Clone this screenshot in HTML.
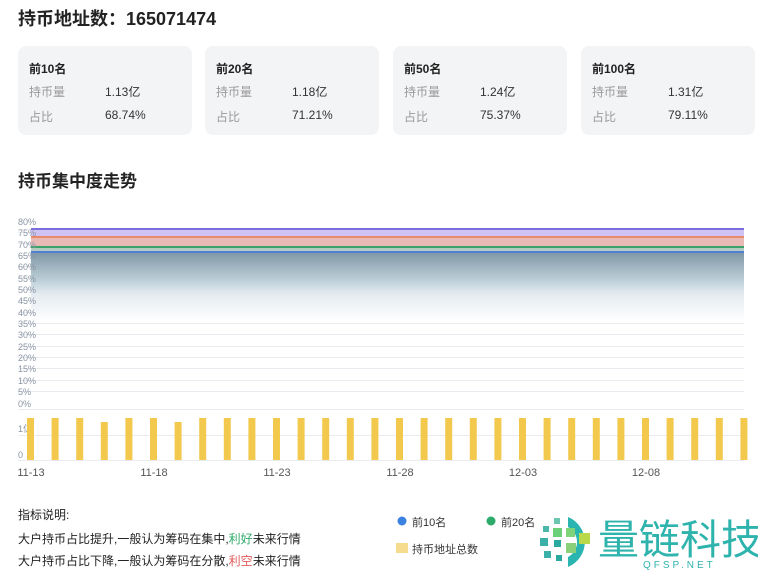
<!DOCTYPE html>
<html><head><meta charset="utf-8"><style>
body{margin:0;width:758px;height:571px;overflow:hidden;background:#fff;font-family:"Liberation Sans","Noto Sans CJK SC",sans-serif;color:#222;position:relative}
.a{position:absolute;white-space:nowrap}
.card{position:absolute;top:46px;width:174px;height:89px;background:#f3f4f6;border-radius:8px}
.card .t{position:absolute;left:11px;top:14px;font-size:12px;font-weight:bold;color:#222}
.card .l{position:absolute;left:11px;font-size:12px;color:#999}
.card .v{position:absolute;left:87px;font-size:12px;color:#333}
</style></head><body>
<div class="a" style="left:18px;top:5px;font-size:18px;font-weight:bold">持币地址数：165071474</div>

<div class="card" style="left:18px"><div class="t">前10名</div><div class="l" style="top:37px">持币量</div><div class="v" style="top:37px">1.13亿</div><div class="l" style="top:62px">占比</div><div class="v" style="top:62px">68.74%</div></div>
<div class="card" style="left:205px"><div class="t">前20名</div><div class="l" style="top:37px">持币量</div><div class="v" style="top:37px">1.18亿</div><div class="l" style="top:62px">占比</div><div class="v" style="top:62px">71.21%</div></div>
<div class="card" style="left:393px"><div class="t">前50名</div><div class="l" style="top:37px">持币量</div><div class="v" style="top:37px">1.24亿</div><div class="l" style="top:62px">占比</div><div class="v" style="top:62px">75.37%</div></div>
<div class="card" style="left:581px"><div class="t">前100名</div><div class="l" style="top:37px">持币量</div><div class="v" style="top:37px">1.31亿</div><div class="l" style="top:62px">占比</div><div class="v" style="top:62px">79.11%</div></div>

<div class="a" style="left:18px;top:167px;font-size:17px;font-weight:bold">持币集中度走势</div>

<svg class="a" style="left:0;top:0" width="758" height="571">
<defs>
<linearGradient id="g" x1="0" y1="0" x2="0" y2="1">
<stop offset="0" stop-color="#7f97a5"/><stop offset="0.4" stop-color="#bccfd8"/><stop offset="0.6" stop-color="#e4ebf0"/><stop offset="1" stop-color="#fff"/>
</linearGradient>
</defs>
<g stroke="#e8ebef" stroke-width="1">
<line x1="18" x2="744" y1="232.5" y2="232.5"/><line x1="18" x2="744" y1="243.5" y2="243.5"/><line x1="18" x2="744" y1="255.5" y2="255.5"/><line x1="18" x2="744" y1="266.5" y2="266.5"/><line x1="18" x2="744" y1="277.5" y2="277.5"/><line x1="18" x2="744" y1="289.5" y2="289.5"/><line x1="18" x2="744" y1="300.5" y2="300.5"/><line x1="18" x2="744" y1="312.5" y2="312.5"/><line x1="18" x2="744" y1="323.5" y2="323.5"/><line x1="18" x2="744" y1="334.5" y2="334.5"/><line x1="18" x2="744" y1="346.5" y2="346.5"/><line x1="18" x2="744" y1="357.5" y2="357.5"/><line x1="18" x2="744" y1="368.5" y2="368.5"/><line x1="18" x2="744" y1="380.5" y2="380.5"/><line x1="18" x2="744" y1="391.5" y2="391.5"/><line x1="18" x2="744" y1="409.5" y2="409.5"/><line x1="18" x2="744" y1="435.5" y2="435.5"/><line x1="18" x2="744" y1="460.5" y2="460.5"/>
</g>
<rect x="31" y="252" width="713" height="70" fill="url(#g)"/>
<rect x="31" y="229" width="713" height="8" fill="#cfc3f3"/>
<rect x="31" y="237" width="713" height="10" fill="#e8b9b5"/>
<rect x="31" y="247" width="713" height="5" fill="#b6cbc0"/>
<line x1="31" x2="744" y1="229" y2="229" stroke="#7b6fe0" stroke-width="2"/>
<line x1="31" x2="744" y1="237" y2="237" stroke="#e88a6a" stroke-width="2"/>
<line x1="31" x2="744" y1="247" y2="247" stroke="#3aa36a" stroke-width="2"/>
<line x1="31" x2="744" y1="252" y2="252" stroke="#4f7fd6" stroke-width="2"/>
<g font-size="9" fill="#8a94a3" font-family="Liberation Sans,sans-serif">
<text x="18" y="225">80%</text><text x="18" y="236">75%</text><text x="18" y="248">70%</text><text x="18" y="259">65%</text><text x="18" y="270">60%</text><text x="18" y="282">55%</text><text x="18" y="293">50%</text><text x="18" y="304">45%</text><text x="18" y="316">40%</text><text x="18" y="327">35%</text><text x="18" y="338">30%</text><text x="18" y="350">25%</text><text x="18" y="361">20%</text><text x="18" y="372">15%</text><text x="18" y="384">10%</text><text x="18" y="395">5%</text><text x="18" y="407">0%</text>
<text x="18" y="432">1亿</text><text x="18" y="458">0</text>
</g>
<g fill="#f2c94c">
<rect x="27" y="418" width="7" height="42"/><rect x="51.6" y="418" width="7" height="42"/><rect x="76.2" y="418" width="7" height="42"/><rect x="100.8" y="422" width="7" height="38"/><rect x="125.4" y="418" width="7" height="42"/><rect x="150" y="418" width="7" height="42"/><rect x="174.6" y="422" width="7" height="38"/><rect x="199.2" y="418" width="7" height="42"/><rect x="223.8" y="418" width="7" height="42"/><rect x="248.4" y="418" width="7" height="42"/><rect x="273" y="418" width="7" height="42"/><rect x="297.6" y="418" width="7" height="42"/><rect x="322.2" y="418" width="7" height="42"/><rect x="346.8" y="418" width="7" height="42"/><rect x="371.4" y="418" width="7" height="42"/><rect x="396" y="418" width="7" height="42"/><rect x="420.6" y="418" width="7" height="42"/><rect x="445.2" y="418" width="7" height="42"/><rect x="469.8" y="418" width="7" height="42"/><rect x="494.4" y="418" width="7" height="42"/><rect x="519" y="418" width="7" height="42"/><rect x="543.6" y="418" width="7" height="42"/><rect x="568.2" y="418" width="7" height="42"/><rect x="592.8" y="418" width="7" height="42"/><rect x="617.4" y="418" width="7" height="42"/><rect x="642" y="418" width="7" height="42"/><rect x="666.6" y="418" width="7" height="42"/><rect x="691.2" y="418" width="7" height="42"/><rect x="715.8" y="418" width="7" height="42"/><rect x="740.4" y="418" width="7" height="42"/>
</g>
<g font-size="11" fill="#555" font-family="Liberation Sans,sans-serif" text-anchor="middle">
<text x="31" y="476">11-13</text><text x="154" y="476">11-18</text><text x="277" y="476">11-23</text><text x="400" y="476">11-28</text><text x="523" y="476">12-03</text><text x="646" y="476">12-08</text>
</g>
<circle cx="402" cy="521" r="4.5" fill="#3b82e0"/><circle cx="491" cy="521" r="4.5" fill="#2eaa6a"/>
<rect x="396" y="543" width="12" height="10" fill="#f5dc8e"/>
<g>
<path d="M568 517 A27 27 0 0 1 568 567 L568 557 A17 17 0 0 0 568 527 Z" fill="#2bb5b0"/>
<rect x="554" y="518" width="6" height="6" fill="#6cc6b0"/><rect x="543" y="526" width="6" height="6" fill="#4ab8a8"/><rect x="553" y="528" width="9" height="9" fill="#6cd07a"/><rect x="566" y="528" width="9" height="9" fill="#7fd47a"/><rect x="579" y="533" width="11" height="11" fill="#b9d84a"/><rect x="540" y="538" width="8" height="8" fill="#3bb0a8"/><rect x="554" y="540" width="7" height="7" fill="#2aa9a0"/><rect x="566" y="543" width="10" height="10" fill="#8ad07a"/><rect x="544" y="551" width="7" height="7" fill="#3ab0a8"/><rect x="556" y="555" width="6" height="6" fill="#2aa9a0"/>
</g>
<text x="598" y="554" font-size="41" fill="#2fb3ad" font-family="Noto Sans CJK SC,sans-serif">量链科技</text>
<text x="643" y="568" font-size="10" fill="#2fb3ad" letter-spacing="3" font-family="Liberation Sans,sans-serif">QFSP.NET</text>
</svg>

<div class="a" style="left:412px;top:514px;font-size:11px;color:#333">前10名</div>
<div class="a" style="left:501px;top:514px;font-size:11px;color:#333">前20名</div>
<div class="a" style="left:412px;top:541px;font-size:11px;color:#333">持币地址总数</div>

<div class="a" style="left:18px;top:506px;font-size:12px;color:#222">指标说明:</div>
<div class="a" style="left:18px;top:530px;font-size:12px;color:#222">大户持币占比提升,一般认为筹码在集中,<span style="color:#2eaa6a">利好</span>未来行情</div>
<div class="a" style="left:18px;top:552px;font-size:12px;color:#222">大户持币占比下降,一般认为筹码在分散,<span style="color:#e05a5a">利空</span>未来行情</div>
</body></html>
